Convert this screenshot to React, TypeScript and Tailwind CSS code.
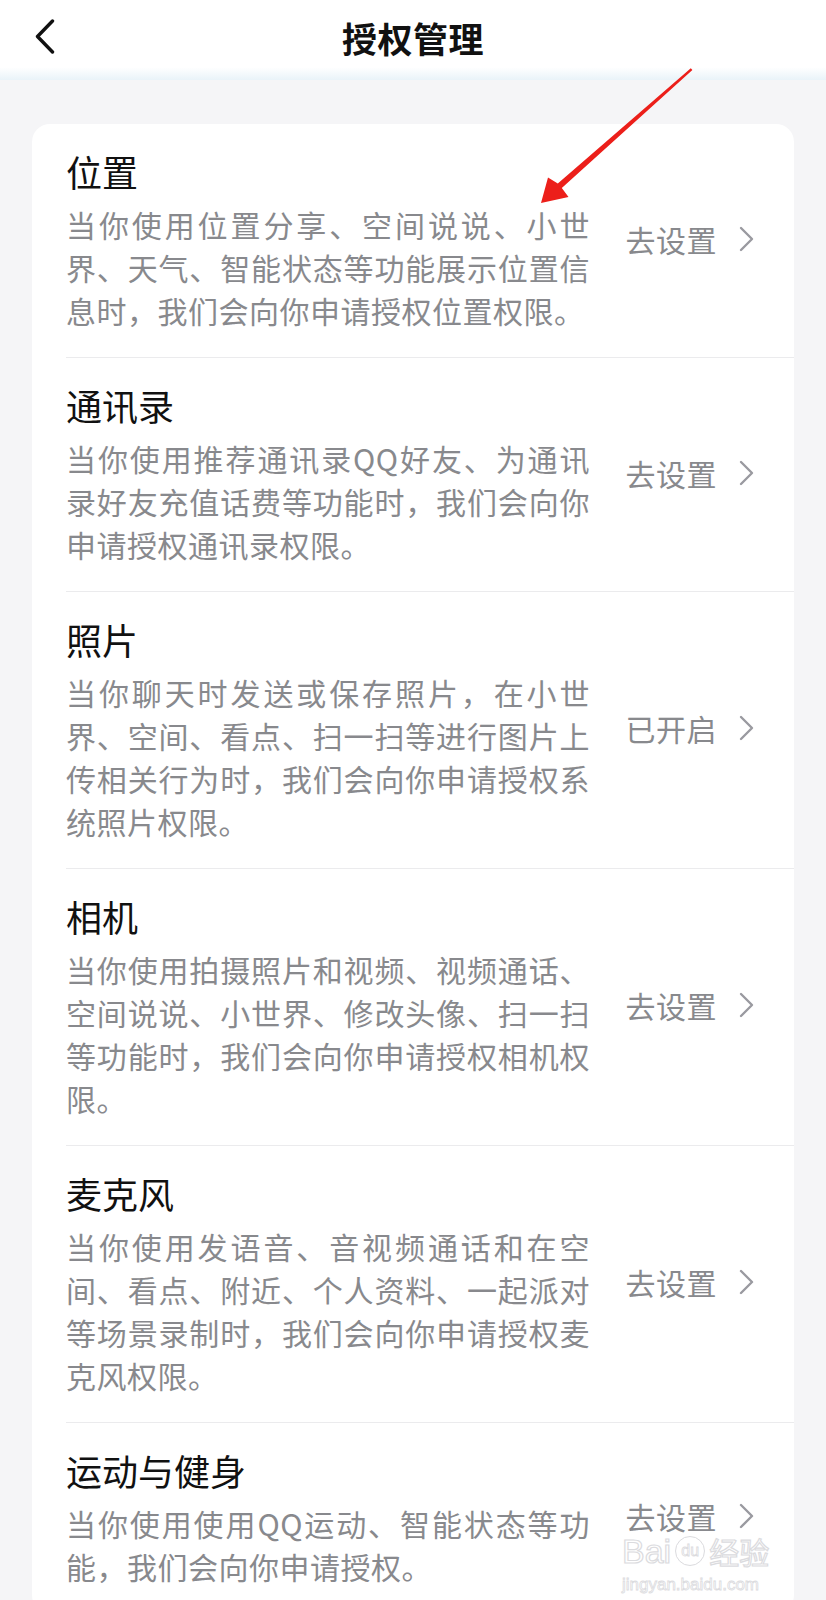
import React from "react";

type Item = { title: string; desc: string; action: string };

const items: Item[] = [
  {
    title: "位置",
    desc: "当你使用位置分享、空间说说、小世界、天气、智能状态等功能展示位置信息时，我们会向你申请授权位置权限。",
    action: "去设置",
  },
  {
    title: "通讯录",
    desc: "当你使用推荐通讯录QQ好友、为通讯录好友充值话费等功能时，我们会向你申请授权通讯录权限。",
    action: "去设置",
  },
  {
    title: "照片",
    desc: "当你聊天时发送或保存照片，在小世界、空间、看点、扫一扫等进行图片上传相关行为时，我们会向你申请授权系统照片权限。",
    action: "已开启",
  },
  {
    title: "相机",
    desc: "当你使用拍摄照片和视频、视频通话、空间说说、小世界、修改头像、扫一扫等功能时，我们会向你申请授权相机权限。",
    action: "去设置",
  },
  {
    title: "麦克风",
    desc: "当你使用发语音、音视频通话和在空间、看点、附近、个人资料、一起派对等场景录制时，我们会向你申请授权麦克风权限。",
    action: "去设置",
  },
  {
    title: "运动与健身",
    desc: "当你使用使用QQ运动、智能状态等功能，我们会向你申请授权。",
    action: "去设置",
  },
];

function Row({ item, first }: { item: Item; first: boolean }) {
  return (
    <div
      className={
        "flex items-center pr-[40px] pt-[25px] pb-[25px] " +
        (first ? "" : "border-t border-[#ebebed]")
      }
    >
      <div className="w-[524px] shrink-0">
        <div className="text-[36px] leading-[44px] text-[#111111]">{item.title}</div>
        <p className="mt-[10px] text-[30px] leading-[43px] tracking-[0.5px] text-justify text-[#88898d]">
          {item.desc}
        </p>
      </div>
      <div className="ml-auto mb-[4px] flex items-center">
        <span className="text-[30px] leading-none tracking-[0.5px] text-[#88898d]">{item.action}</span>
        <svg width="15" height="26" viewBox="0 0 15 26" className="ml-[22px]">
          <polyline
            points="2,2 13,13 2,24"
            fill="none"
            stroke="#9a9aa0"
            strokeWidth="2.4"
            strokeLinecap="round"
            strokeLinejoin="round"
          />
        </svg>
      </div>
    </div>
  );
}

export default function App() {
  return (
    <div className="relative min-h-[1600px] overflow-hidden bg-[#f5f5f7] font-['Noto_Sans_CJK_SC','Noto_Sans',sans-serif]">
      <header className="grid h-[80px] grid-cols-[1fr_auto_1fr] items-center bg-linear-to-b from-white from-[84%] to-[#e9f3f9] pb-[6px]">
        <div className="pl-[35px]">
          <svg width="20" height="36" viewBox="0 0 20 36">
            <polyline
              points="17.5,2 2.5,17.5 17.5,33"
              fill="none"
              stroke="#111"
              strokeWidth="3.4"
              strokeLinecap="round"
              strokeLinejoin="round"
            />
          </svg>
        </div>
        <h1 className="text-[35px] font-bold leading-none tracking-[0.5px] text-[#111111]">授权管理</h1>
        <div />
      </header>

      <div className="mx-[32px] mt-[44px] rounded-[18px] bg-white pl-[34px]">
        {items.map((it, i) => (
          <Row key={it.title} item={it} first={i === 0} />
        ))}
      </div>

      {/* red annotation arrow */}
      <svg
        className="pointer-events-none absolute left-0 top-0"
        width="826"
        height="260"
        viewBox="0 0 826 260"
      >
        <polygon
          points="541,203 548,177.5 557.8,183.6 690.8,68.2 692.4,70 561.8,188 568.5,197"
          fill="#ec1f1a"
        />
      </svg>

      {/* watermark */}
      <div className="pointer-events-none absolute left-[622px] top-[1534px] flex flex-col items-start text-white opacity-80">
        <div className="flex items-center font-['Liberation_Sans',sans-serif] text-[34px] leading-none text-white [-webkit-text-stroke:1.2px_#d3d3d7]">
          <span>Bai</span>
          <span className="mx-[4px] flex h-[30px] w-[30px] items-center justify-center rounded-full border-[1.5px] border-[#d3d3d7] text-[16px] [-webkit-text-stroke:0.8px_#d3d3d7]">
            du
          </span>
          <span className="font-['Noto_Sans_CJK_SC',sans-serif] text-[30px]">经验</span>
        </div>
        <div className="mt-[8px] font-['Liberation_Sans',sans-serif] text-[17px] leading-none text-white [-webkit-text-stroke:0.8px_#d3d3d7]">
          jingyan.baidu.com
        </div>
      </div>
    </div>
  );
}
